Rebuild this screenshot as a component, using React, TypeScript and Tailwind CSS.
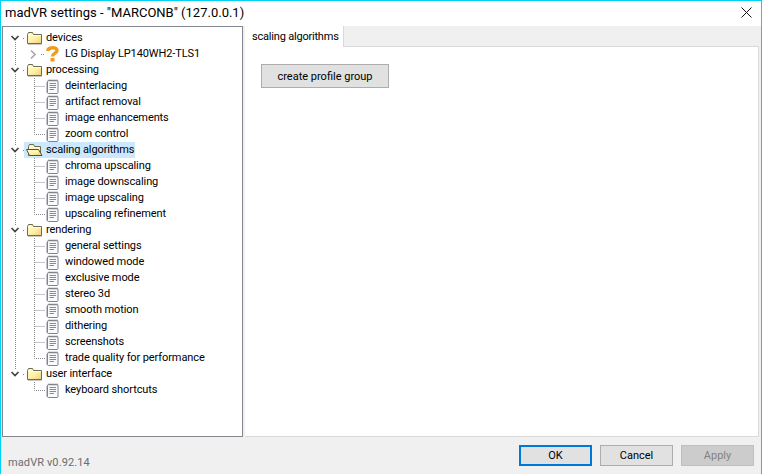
import React from "react";

const font = "font-['Roboto','Noto_Sans',sans-serif]";

const FolderIcon = ({ open }: { open?: boolean }) => (
  <svg width="17" height="14" viewBox="0 0 17 14" className="shrink-0">
    <defs>
      <linearGradient id="fold" x1="0" y1="0" x2="1" y2="1">
        <stop offset="0" stopColor="#fffce0" />
        <stop offset="0.5" stopColor="#fff2a8" />
        <stop offset="1" stopColor="#efcf80" />
      </linearGradient>
    </defs>
    {open ? (
      <>
        <path d="M2.5 3.5 L3.5 1.5 H7.5 L8.5 3.5 H14.5 V12.5 H2.5 Z" fill="#fff6c0" stroke="#6b6b55" />
        <path d="M0.5 6.5 H12.5 L16 12.5 H3.5 Z" fill="url(#fold)" stroke="#54513c" />
      </>
    ) : (
      <>
        <path d="M1.5 3.5 L2.5 1.5 H6.5 L7.5 3.5 H15.5 V12.5 H1.5 Z" fill="url(#fold)" stroke="#6b6b55" />
        <path d="M2 4.5 H15" stroke="#fffde8" />
        <path d="M2 13.5 H16" stroke="#c9c9c0" />
      </>
    )}
  </svg>
);

const NoteIcon = () => (
  <svg width="13" height="15" viewBox="0 0 13 15" className="shrink-0">
    <rect x="1.5" y="1.5" width="10.5" height="13" rx="1" fill="#f8fafd" stroke="#76849a" />
    <path d="M3 0.5 V2.5 M5 0.5 V2.5 M7 0.5 V2.5 M9 0.5 V2.5 M11 0.5 V2.5" stroke="#8d8672" />
    <path d="M3.5 4.5 H10 M3.5 6.5 H10 M3.5 8.5 H10 M3.5 10.5 H8" stroke="#7d8ca5" />
    <path d="M0.5 3 V14" stroke="#c3c8d1" />
  </svg>
);

const QuestionIcon = () => (
  <svg width="13" height="16" viewBox="0 0 13 16" className="shrink-0">
    <path d="M1.8 5 C2 0.8 11 0.6 11 4.5 C11 7.2 6.5 7 6.5 10.5" fill="none" stroke="#f59a16" strokeWidth="3.4" />
    <rect x="4.5" y="12" width="4" height="3.5" fill="#f59a16" />
  </svg>
);

const Dotted = ({ d }: { d: string }) => <path d={d} stroke="#8a8a8a" strokeDasharray="1 1" fill="none" />;

// gutter of a top level row, the dotted trunk stops on the last group
const TopGutter = ({ first, last }: { first?: boolean; last?: boolean }) => (
  <svg width="21" height="16" className="shrink-0">
    {!first && <Dotted d="M12.5 0 V4" />}
    {!last && <Dotted d="M12.5 12 V16" />}
    <path d="M8.5 6 L12 9.5 L15.5 6" fill="none" stroke="#404040" strokeWidth="1.6" />
    <path d="M20 8.5 H21" stroke="#8a8a8a" />
  </svg>
);

const ChildGutter = ({ trunk, end, expander }: { trunk: boolean; end?: boolean; expander?: boolean }) => (
  <svg width="42" height="16" className="shrink-0">
    {trunk && <Dotted d="M12.5 0 V16" />}
    {expander ? (
      <>
        <path d="M28 4.5 L32 8.5 L28 12.5" fill="none" stroke="#a6a6a6" strokeWidth="1.6" />
        <Dotted d="M38 8.5 H42" />
      </>
    ) : (
      <Dotted d={end ? "M31.5 0 V8.5 H42" : "M31.5 0 V16 M31.5 8.5 H42"} />
    )}
  </svg>
);

const groups = [
  { name: "devices", children: ["LG Display LP140WH2-TLS1"] },
  { name: "processing", children: ["deinterlacing", "artifact removal", "image enhancements", "zoom control"] },
  { name: "scaling algorithms", open: true, children: ["chroma upscaling", "image downscaling", "image upscaling", "upscaling refinement"] },
  {
    name: "rendering",
    children: ["general settings", "windowed mode", "exclusive mode", "stereo 3d", "smooth motion", "dithering", "screenshots", "trade quality for performance"],
  },
  { name: "user interface", children: ["keyboard shortcuts"] },
];

const Btn = ({ label, kind }: { label: string; kind?: "primary" | "off" }) => (
  <button
    className={
      "w-[73px] h-[21px] flex items-center justify-center pt-px text-[11px] " +
      (kind === "primary"
        ? "border-2 border-[#0078d7] bg-[#e1e1e1] text-black"
        : kind === "off"
          ? "border border-[#bfbfbf] bg-[#cccccc] text-[#838383]"
          : "border border-[#adadad] bg-[#e1e1e1] text-black")
    }
  >
    {label}
  </button>
);

export default function App() {
  return (
    <div className={`${font} w-[762px] h-[474px] flex flex-col bg-[#f0f0f0] border-x border-t border-[#00d2f5] text-black overflow-hidden`}>
      <div className="h-[25px] shrink-0 bg-white flex items-center justify-between pl-1 pr-[9px] pb-[3px]">
        <span className="text-[13px] leading-none whitespace-nowrap">madVR settings - "MARCONB" (127.0.0.1)</span>
        <svg width="11" height="11" viewBox="0 0 11 11">
          <path d="M0.5 0.5 L10.5 10.5 M10.5 0.5 L0.5 10.5" stroke="#111" />
        </svg>
      </div>

      <div className="flex h-[411px] shrink-0 pl-px pr-[2px] gap-[2px]">
        <div className="w-[241px] shrink-0 bg-white border border-[#828790] pt-[3px] text-[11px] tracking-[-0.1px]">
          {groups.map((g, gi) => (
            <div key={g.name}>
              <div className="flex h-4 items-center">
                <TopGutter first={gi === 0} last={gi === groups.length - 1} />
                <div className={"flex items-center h-4 pl-[2px] gap-[3px] " + (g.open ? "w-[111px] bg-[#cce8ff]" : "")}>
                  <FolderIcon open={g.open} />
                  <span className="leading-4 whitespace-nowrap">{g.name}</span>
                </div>
              </div>
              {g.children.map((c, ci) => (
                <div key={c} className="flex h-4 items-center">
                  <ChildGutter trunk={gi < groups.length - 1} end={ci === g.children.length - 1} expander={gi === 0} />
                  <div className="flex items-center gap-[6px] pl-[1px]">
                    {gi === 0 ? <QuestionIcon /> : <NoteIcon />}
                    <span className="leading-4 whitespace-nowrap">{c}</span>
                  </div>
                </div>
              ))}
            </div>
          ))}
        </div>

        <div className="flex-1 flex flex-col">
          <div className="flex h-[21px] shrink-0 border-b border-[#d9d9d9]">
            <div className="w-[99px] h-[21px] bg-white border-r border-[#d9d9d9] text-[11px] tracking-[-0.2px] flex items-center pl-[7px] pt-[2px] whitespace-nowrap">scaling algorithms</div>
          </div>
          <div className="flex-1 bg-white border-r border-b border-[#d9d9d9] pl-[16px] pt-[17px]">
            <button className="w-[128px] h-[24px] bg-[#e1e1e1] border border-[#adadad] text-[11px] flex items-center justify-center pt-[3px]">create profile group</button>
          </div>
        </div>
      </div>

      <div className="flex-1 flex items-center justify-between pl-[7px] pr-[7px]">
        <span className="text-[11px] tracking-[0.1px] text-[#6d6d6d] pt-[15px]">madVR v0.92.14</span>
        <div className="flex gap-2">
          <Btn label="OK" kind="primary" />
          <Btn label="Cancel" />
          <Btn label="Apply" kind="off" />
        </div>
      </div>
    </div>
  );
}
